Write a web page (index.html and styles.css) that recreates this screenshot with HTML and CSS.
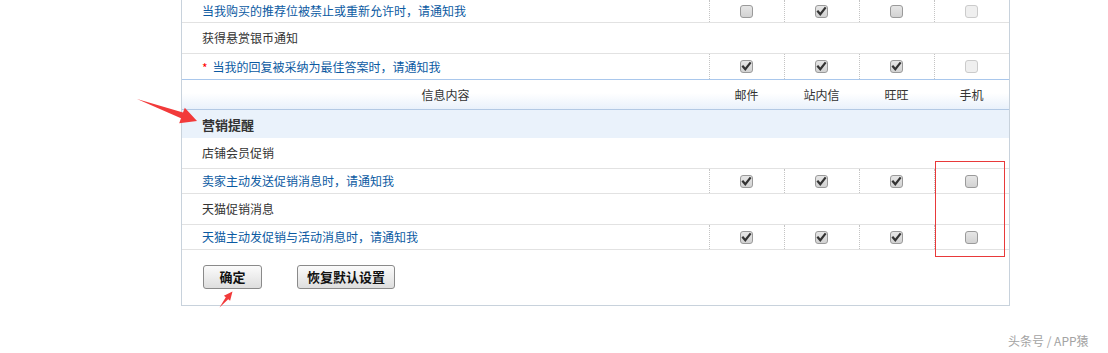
FILE: index.html
```html
<!DOCTYPE html>
<html lang="zh-CN">
<head>
<meta charset="utf-8">
<title>消息设置</title>
<link rel="stylesheet" href="styles.css">
</head>
<body>
<div class="panel">
  <div class="row opts h22">
    <div class="label link">当我购买的推荐位被禁止或重新允许时，请通知我</div>
    <div class="cell"><span class="cb"></span></div>
    <div class="cell"><span class="cb on"><svg viewBox="0 0 13 13"><path d="M3 6.5 L5.3 9.2 L10 3.2"/></svg></span></div>
    <div class="cell"><span class="cb"></span></div>
    <div class="cell"><span class="cb off"></span></div>
  </div>
  <div class="row plain h30">
    <div class="label">获得悬赏银币通知</div>
  </div>
  <div class="row opts h25 nob">
    <div class="label link"><span class="star">*</span>当我的回复被采纳为最佳答案时，请通知我</div>
    <div class="cell"><span class="cb on"><svg viewBox="0 0 13 13"><path d="M3 6.5 L5.3 9.2 L10 3.2"/></svg></span></div>
    <div class="cell"><span class="cb on"><svg viewBox="0 0 13 13"><path d="M3 6.5 L5.3 9.2 L10 3.2"/></svg></span></div>
    <div class="cell"><span class="cb on"><svg viewBox="0 0 13 13"><path d="M3 6.5 L5.3 9.2 L10 3.2"/></svg></span></div>
    <div class="cell"><span class="cb off"></span></div>
  </div>
  <div class="row head">
    <div class="hcell">信息内容</div>
    <div class="hcell">邮件</div>
    <div class="hcell">站内信</div>
    <div class="hcell">旺旺</div>
    <div class="hcell">手机</div>
  </div>
  <div class="row section">
    <div class="label bold">营销提醒</div>
  </div>
  <div class="row plain h30">
    <div class="label">店铺会员促销</div>
  </div>
  <div class="row opts h24">
    <div class="label link">卖家主动发送促销消息时，请通知我</div>
    <div class="cell"><span class="cb on"><svg viewBox="0 0 13 13"><path d="M3 6.5 L5.3 9.2 L10 3.2"/></svg></span></div>
    <div class="cell"><span class="cb on"><svg viewBox="0 0 13 13"><path d="M3 6.5 L5.3 9.2 L10 3.2"/></svg></span></div>
    <div class="cell"><span class="cb on"><svg viewBox="0 0 13 13"><path d="M3 6.5 L5.3 9.2 L10 3.2"/></svg></span></div>
    <div class="cell"><span class="cb"></span></div>
  </div>
  <div class="row plain h30">
    <div class="label">天猫促销消息</div>
  </div>
  <div class="row opts h24">
    <div class="label link">天猫主动发促销与活动消息时，请通知我</div>
    <div class="cell"><span class="cb on"><svg viewBox="0 0 13 13"><path d="M3 6.5 L5.3 9.2 L10 3.2"/></svg></span></div>
    <div class="cell"><span class="cb on"><svg viewBox="0 0 13 13"><path d="M3 6.5 L5.3 9.2 L10 3.2"/></svg></span></div>
    <div class="cell"><span class="cb on"><svg viewBox="0 0 13 13"><path d="M3 6.5 L5.3 9.2 L10 3.2"/></svg></span></div>
    <div class="cell"><span class="cb"></span></div>
  </div>
  <div class="actions">
    <button class="btn ok">确定</button>
    <button class="btn reset">恢复默认设置</button>
  </div>
</div>

<div class="mark-box"></div>
<svg class="arrows" width="1108" height="353" viewBox="0 0 1108 353">
  <polygon points="137,99 183,112.6 184.8,107.8 197,121 179.2,123.2 181,118.3" />
  <polygon points="219.5,307.5 228.2,299.2 230.1,300.8 232.5,291.5 223.9,295.8 225.8,297.3" />
</svg>
<div class="watermark">头条号 / APP猿</div>
</body>
</html>
```
FILE: styles.css
```css
html, body {
  margin: 0;
  padding: 0;
  background: #ffffff;
}
body {
  font-family: "Noto Sans CJK SC", "Liberation Sans", sans-serif;
  font-size: 12px;
  color: #333333;
  position: relative;
  width: 1108px;
  height: 353px;
  overflow: hidden;
}
.panel {
  box-sizing: border-box;
  width: 829px;
  margin-left: 181px;
  border-left: 1px solid #c8d2dc;
  border-right: 1px solid #c8d2dc;
  border-bottom: 1px solid #c8d2dc;
}
.row {
  display: grid;
  grid-template-columns: 527px 75px 75px 75px 75px;
  border-bottom: 1px solid #e2e2e2;
  box-sizing: border-box;
}
.row.nob { border-bottom: none; }
.h22 { height: 23px; }
.h24 { height: 25px; }
.h25 { height: 25px; }
.h30 { height: 31px; }
.label {
  grid-column: 1 / 2;
  display: flex;
  align-items: center;
  padding-left: 20px;
  white-space: nowrap;
  line-height: 1;
}
.plain .label, .section .label { grid-column: 1 / 6; }
.link { color: #0b5aa2; }
.star {
  color: #ff0000;
  margin-right: 5px;
  position: relative;
  top: 1px;
}
.cell {
  border-left: 1px dotted #c4c4c4;
  display: flex;
  align-items: center;
  justify-content: center;
  padding-right: 1px;
}
.cb {
  box-sizing: border-box;
  width: 13px;
  height: 13px;
  border: 1px solid #9a9a9a;
  border-radius: 3px;
  background: linear-gradient(#e6e6e6, #d2d2d2);
  display: block;
  position: relative;
}
.cb svg {
  position: absolute;
  left: -1px;
  top: -1px;
  width: 13px;
  height: 13px;
}
.cb svg path {
  fill: none;
  stroke: #333333;
  stroke-width: 2.2;
  stroke-linecap: square;
}
.cb.off {
  border-color: #cbcbcb;
  background: #efefef;
}
.head {
  height: 31px;
  border-top: 1px solid #a9c7ec;
  border-bottom: 1px solid #b3c9e4;
  background: linear-gradient(#ffffff 0%, #ffffff 45%, #e9f1fb 100%);
}
.hcell {
  display: flex;
  align-items: center;
  justify-content: center;
  color: #333333;
}
.section {
  height: 28px;
  background: #eaf2fb;
  border-bottom: none;
}
.bold {
  font-weight: bold;
  font-size: 13px;
  color: #333333;
}
.actions {
  height: 55px;
  box-sizing: border-box;
  padding: 15px 0 0 21px;
  display: flex;
  align-items: flex-start;
  gap: 35px;
}
.btn {
  box-sizing: border-box;
  height: 24px;
  border: 1px solid #8a8a8a;
  border-radius: 3px;
  background: linear-gradient(#fbfbfb, #dedede);
  font-family: "Noto Sans CJK SC", "Liberation Sans", sans-serif;
  font-size: 13px;
  font-weight: bold;
  color: #111111;
  padding: 0;
  line-height: 20px;
}
.ok { width: 59px; }
.reset { width: 98px; }
.mark-box {
  position: absolute;
  left: 935px;
  top: 161px;
  width: 70px;
  height: 96px;
  box-sizing: border-box;
  border: 1px solid #e8393a;
}
.arrows {
  position: absolute;
  left: 0;
  top: 0;
  pointer-events: none;
}
.arrows polygon { fill: #f23a3a; }
.watermark {
  position: absolute;
  left: 1008px;
  top: 332px;
  font-size: 12px;
  color: #a3a3a3;
  white-space: nowrap;
}
```
